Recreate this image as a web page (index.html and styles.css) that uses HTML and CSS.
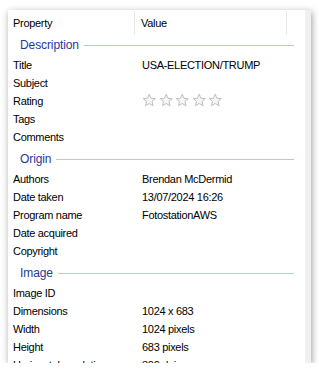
FILE: index.html
```html
<!DOCTYPE html>
<html lang="en">
<head>
    <meta charset="UTF-8">
    <meta name="viewport" content="width=device-width, initial-scale=1.0">
    <title>Properties - Details</title>
    <link rel="stylesheet" href="styles.css">
</head>
<body>
    <div class="panel">
        <div class="list">
            <div class="head">
                <div class="head-cell head-prop">Property</div>
                <div class="head-cell head-value">Value</div>
            </div>

            <div class="group first">
                <span class="group-title">Description</span>
                <span class="group-line"></span>
            </div>
            <div class="row"><span class="name">Title</span><span class="value">USA-ELECTION/TRUMP</span></div>
            <div class="row"><span class="name">Subject</span><span class="value"></span></div>
            <div class="row">
                <span class="name">Rating</span>
                <span class="value stars">
                    <svg class="star" viewBox="0 0 14 14"><path d="M7 1.2 8.7 5.1 12.8 5.4 9.7 8.1 10.6 12.3 7 10.1 3.4 12.3 4.3 8.1 1.2 5.4 5.3 5.1Z"/></svg>
                    <svg class="star" viewBox="0 0 14 14"><path d="M7 1.2 8.7 5.1 12.8 5.4 9.7 8.1 10.6 12.3 7 10.1 3.4 12.3 4.3 8.1 1.2 5.4 5.3 5.1Z"/></svg>
                    <svg class="star" viewBox="0 0 14 14"><path d="M7 1.2 8.7 5.1 12.8 5.4 9.7 8.1 10.6 12.3 7 10.1 3.4 12.3 4.3 8.1 1.2 5.4 5.3 5.1Z"/></svg>
                    <svg class="star" viewBox="0 0 14 14"><path d="M7 1.2 8.7 5.1 12.8 5.4 9.7 8.1 10.6 12.3 7 10.1 3.4 12.3 4.3 8.1 1.2 5.4 5.3 5.1Z"/></svg>
                    <svg class="star" viewBox="0 0 14 14"><path d="M7 1.2 8.7 5.1 12.8 5.4 9.7 8.1 10.6 12.3 7 10.1 3.4 12.3 4.3 8.1 1.2 5.4 5.3 5.1Z"/></svg>
                </span>
            </div>
            <div class="row"><span class="name">Tags</span><span class="value"></span></div>
            <div class="row"><span class="name">Comments</span><span class="value"></span></div>

            <div class="group">
                <span class="group-title">Origin</span>
                <span class="group-line"></span>
            </div>
            <div class="row"><span class="name">Authors</span><span class="value">Brendan McDermid</span></div>
            <div class="row"><span class="name">Date taken</span><span class="value">13/07/2024 16:26</span></div>
            <div class="row"><span class="name">Program name</span><span class="value">FotostationAWS</span></div>
            <div class="row"><span class="name">Date acquired</span><span class="value"></span></div>
            <div class="row"><span class="name">Copyright</span><span class="value"></span></div>

            <div class="group">
                <span class="group-title">Image</span>
                <span class="group-line"></span>
            </div>
            <div class="row"><span class="name">Image ID</span><span class="value"></span></div>
            <div class="row"><span class="name">Dimensions</span><span class="value">1024 x 683</span></div>
            <div class="row"><span class="name">Width</span><span class="value">1024 pixels</span></div>
            <div class="row"><span class="name">Height</span><span class="value">683 pixels</span></div>
            <div class="row"><span class="name">Horizontal resolution</span><span class="value">300 dpi</span></div>
        </div>
        <div class="track"></div>
    </div>
</body>
</html>
```

FILE: styles.css
```css
body {
    margin: 0;
    background-color: #fff;
    font-family: "Liberation Sans", Arial, sans-serif;
    font-size: 11px;
    letter-spacing: -0.3px;
    color: #000;
}
.panel {
    display: flex;
    width: 303px;
    height: 353px;
    margin: 10px 0 0 8px;
    background-color: #fff;
    box-shadow: 1px 2px 7px rgba(0, 0, 0, 0.38);
    overflow: hidden;
}
.list {
    flex: 1;
    overflow: hidden;
}
.track {
    width: 6px;
    background-color: #f0f0f0;
}
.head {
    display: flex;
    align-items: center;
    height: 25px;
}
.head-cell {
    height: 23px;
    line-height: 24px;
    box-sizing: border-box;
    border-right: 1px solid #e5e5e5;
}
.head-prop {
    width: 127px;
    padding-left: 5px;
}
.head-value {
    width: 152px;
    padding-left: 6px;
}
.group {
    display: flex;
    align-items: center;
    height: 20px;
    margin-top: 4px;
    padding-left: 12px;
}
.group.first {
    margin-top: 0;
}
.group-title {
    font-size: 12px;
    letter-spacing: -0.1px;
    color: #1e3a98;
}
.group-line {
    flex: 1;
    height: 1px;
    margin: 0 11px 0 5px;
    background-color: #b6c5ea;
}
.row {
    display: flex;
    align-items: center;
    height: 18px;
    padding-top: 1px;
    box-sizing: border-box;
    white-space: nowrap;
}
.name {
    width: 134px;
    padding-left: 5px;
    box-sizing: border-box;
}
.value {
    flex: 1;
}
.stars {
    display: flex;
    gap: 2px;
}
.star {
    width: 14.5px;
    height: 14.5px;
}
.star path {
    fill: #f7f7f7;
    stroke: #b8b8b8;
    stroke-width: 0.9;
    stroke-linejoin: round;
}
```
